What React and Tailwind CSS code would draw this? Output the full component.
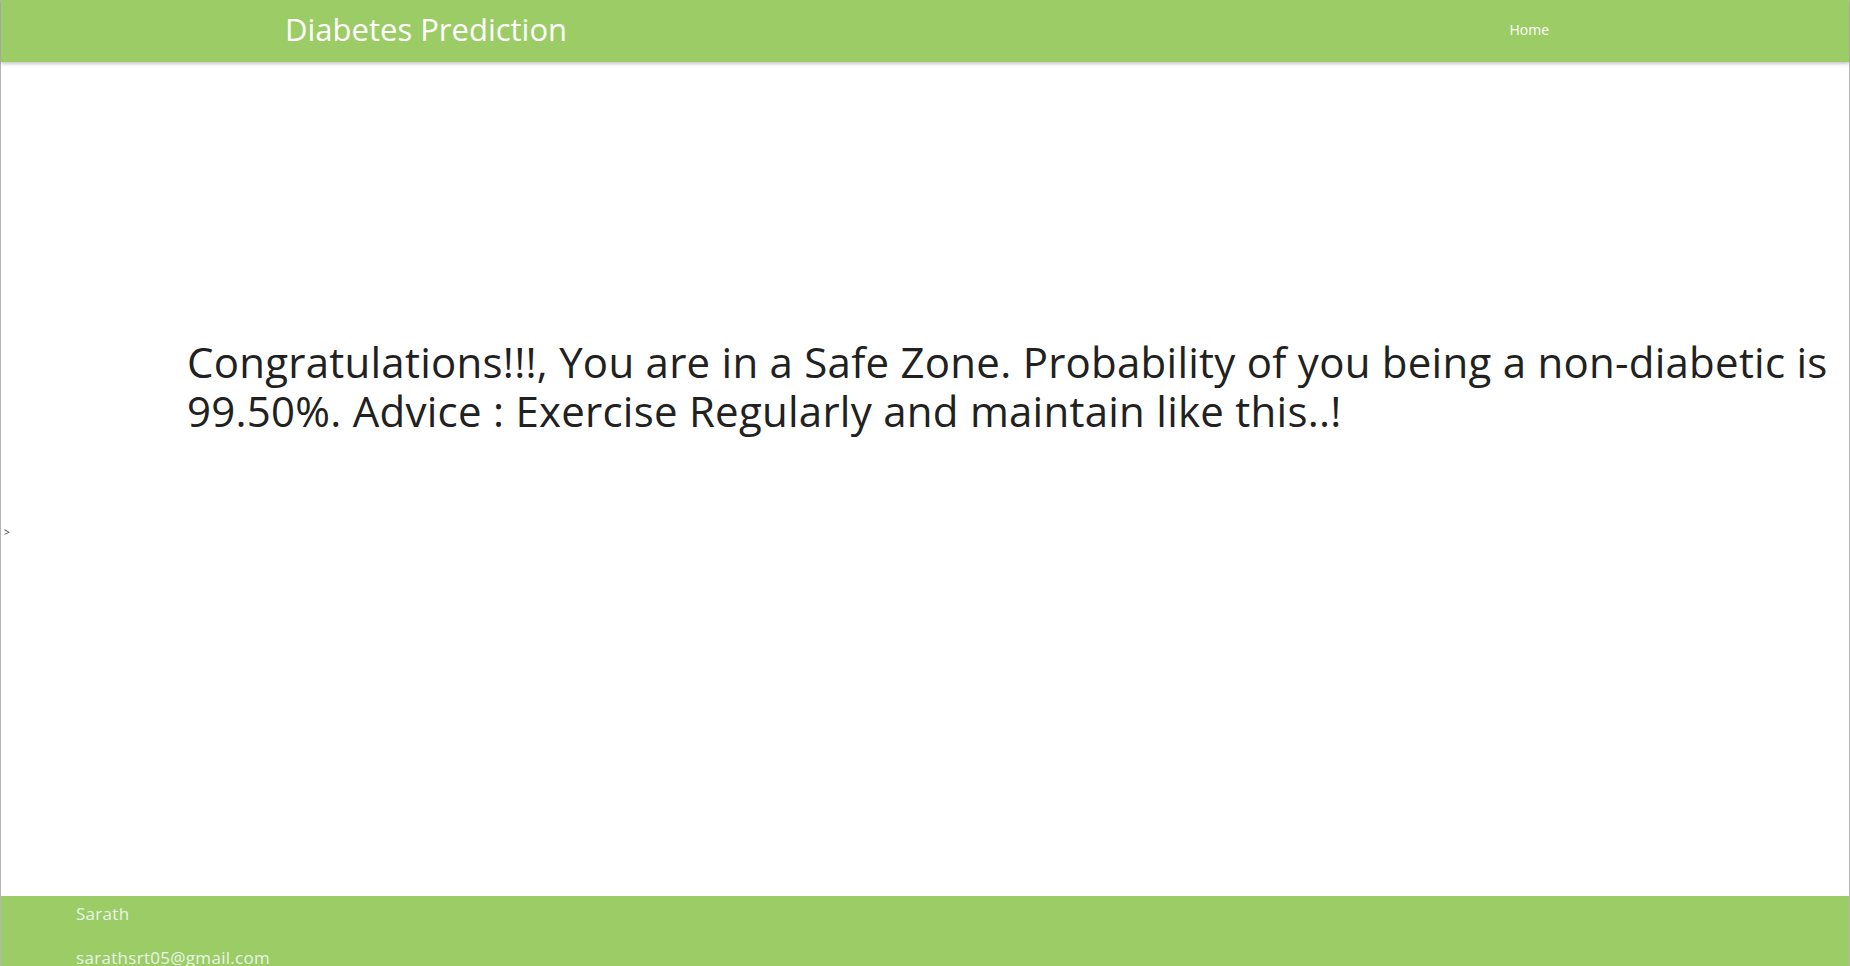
export default function App() {
    return (
        <div
            className="min-h-screen bg-white border-x border-[#b5b5b5] flex flex-col"
            style={{ fontFamily: '"Open Sans", "Noto Sans", sans-serif' }}
        >
            {/* Barra superior */}
            <nav className="h-[62px] bg-[#9ccc65] shadow-[0_2px_3px_rgba(0,0,0,0.22)] flex items-center pb-[4px] relative z-10">
                <div className="pl-[284px] text-[31px] text-white leading-none">
                    Diabetes Prediction
                </div>
                <div className="ml-auto mr-[300px] text-[14px] text-white">
                    Home
                </div>
            </nav>

            {/* Resultado */}
            <main className="h-[834px] relative">
                <h3 className="pt-[275px] pl-[186px] pr-[4px] text-[42px] leading-[49px] text-[#212121] tracking-[0.25px]">
                    Congratulations!!!, You are in a Safe Zone. Probability of you being a
                    non-diabetic is 99.50%. Advice : Exercise Regularly and maintain like
                    this..!
                </h3>
                <span className="absolute left-[3px] top-[463px] text-[10px] text-[#333]">
                    &gt;
                </span>
            </main>

            {/* Pie de página */}
            <footer className="bg-[#9ccc65] pl-[75px] pt-[6px] pb-[20px] text-[#e8f5e9] text-[17px] tracking-[0.3px]">
                <p className="leading-[24px]">Sarath</p>
                <p className="leading-[24px] mt-[20px]">sarathsrt05@gmail.com</p>
            </footer>
        </div>
    );
}
